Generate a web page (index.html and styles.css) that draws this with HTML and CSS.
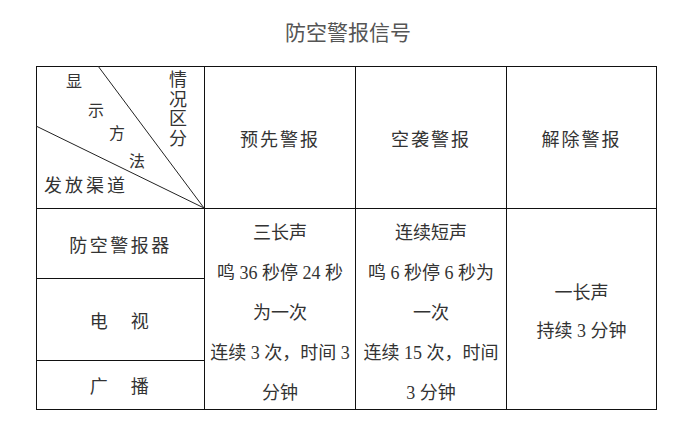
FILE: index.html
```html
<!DOCTYPE html>
<html lang="zh-CN">
<head>
<meta charset="utf-8">
<title>防空警报信号</title>
<link rel="stylesheet" href="styles.css">
</head>
<body>
<h1 class="title">防空警报信号</h1>
<table class="signals">
  <colgroup>
    <col class="c-channel">
    <col class="c-signal">
    <col class="c-signal">
    <col class="c-clear">
  </colgroup>
  <tr class="row-head">
    <th class="diag-cell">
      <div class="diag">
        <svg class="diag-lines" width="170" height="144" viewBox="0 0 170 144">
          <line x1="62" y1="0" x2="168" y2="142"/>
          <line x1="0" y1="60" x2="168" y2="142"/>
        </svg>
        <span class="lbl l1">显</span>
        <span class="lbl l2">示</span>
        <span class="lbl l3">方</span>
        <span class="lbl l4">法</span>
        <span class="lbl l5">发放渠道</span>
        <span class="lbl l6">情况区分</span>
      </div>
    </th>
    <th class="head">预先警报</th>
    <th class="head">空袭警报</th>
    <th class="head">解除警报</th>
  </tr>
  <tr class="row-a">
    <td class="chan">防空警报器</td>
    <td class="sig" rowspan="3"><div class="lines">三长声<br>鸣 36 秒停 24 秒<br>为一次<br>连续 3 次，时间 3<br>分钟</div></td>
    <td class="sig" rowspan="3"><div class="lines">连续短声<br>鸣 6 秒停 6 秒为<br>一次<br>连续 15 次，时间<br>3 分钟</div></td>
    <td class="sig" rowspan="3"><div class="lines short">一长声<br>持续 3 分钟</div></td>
  </tr>
  <tr class="row-b">
    <td class="chan">电　视</td>
  </tr>
  <tr class="row-c">
    <td class="chan">广　播</td>
  </tr>
</table>
</body>
</html>
```
FILE: styles.css
```css
html, body {
  margin: 0;
  padding: 0;
  background: #ffffff;
}

body {
  width: 696px;
  height: 431px;
  overflow: hidden;
  font-family: "Liberation Serif", "Noto Sans CJK SC", serif;
  color: #333;
}

.title {
  margin: 0;
  height: 66px;
  box-sizing: border-box;
  padding-top: 16px;
  text-align: center;
  font-family: "Noto Sans CJK SC", sans-serif;
  font-weight: 400;
  font-size: 21px;
  line-height: 30px;
  color: #555;
}

.signals {
  margin-left: 36px;
  border-collapse: collapse;
  table-layout: fixed;
  width: 621px;
}

.c-channel { width: 168px; }
.c-signal { width: 151px; }
.c-clear { width: 150px; }

.signals th,
.signals td {
  border: 1px solid #111;
  padding: 0;
  text-align: center;
  vertical-align: middle;
  font-weight: 400;
  font-size: 18px;
  color: #333;
}

.row-head { height: 142px; }
.row-a { height: 70px; }
.row-b { height: 81px; }
.row-c { height: 49px; }

.head {
  letter-spacing: 2px;
  padding-left: 2px;
}

.chan {
  letter-spacing: 2.5px;
  padding-left: 2px;
}

.sig .lines {
  line-height: 40px;
  padding-top: 4px;
  margin-bottom: -4px;
}

.sig .lines.short {
  line-height: 38px;
  padding-top: 6px;
  margin-bottom: 0;
}

.diag-cell {
  vertical-align: top;
}

.diag {
  position: relative;
  height: 141px;
}

.diag-lines {
  position: absolute;
  left: -1px;
  top: -1px;
  overflow: visible;
}

.diag-lines line {
  stroke: #222;
  stroke-width: 1;
}

.lbl {
  position: absolute;
  font-family: "Noto Sans CJK SC", sans-serif;
  font-size: 16px;
  line-height: 16px;
  color: #333;
  white-space: nowrap;
}

.l1 { left: 29px; top: 5px; }
.l2 { left: 51px; top: 34px; }
.l3 { left: 72px; top: 57px; }
.l4 { left: 92px; top: 85px; }

.l5 {
  left: 7px;
  top: 108px;
  font-size: 18px;
  line-height: 18px;
  letter-spacing: 3px;
}

.l6 {
  left: 132px;
  top: 2px;
  width: 18px;
  font-size: 18px;
  line-height: 19.5px;
  white-space: normal;
}
```
